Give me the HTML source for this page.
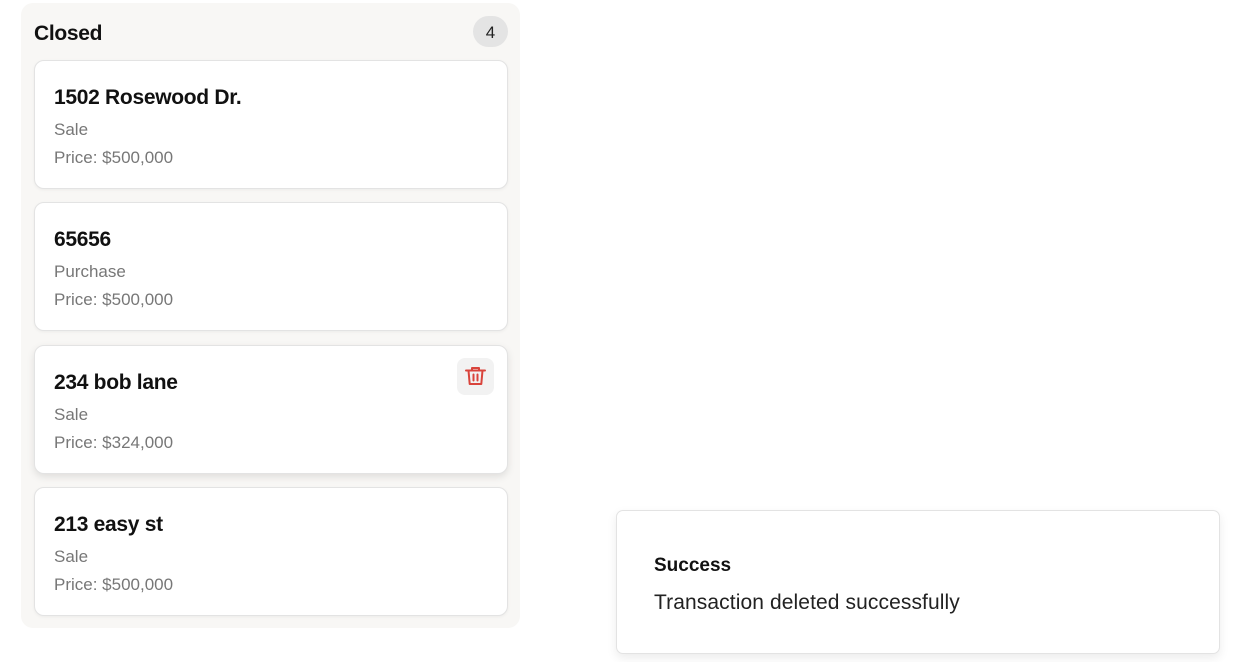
<!DOCTYPE html>
<html><head><style>
body{margin:0;background:#fff;font-family:"Liberation Sans",sans-serif;width:1239px;height:662px;overflow:hidden;position:relative}
.col{position:absolute;left:21px;top:3px;width:499px;height:625px;background:#f8f7f5;border-radius:12px}
.hd{position:absolute;left:13px;top:19px;font-size:21px;font-weight:600;color:#111;letter-spacing:-0.3px}
.badge{position:absolute;left:452px;top:13px;width:35px;height:31px;border-radius:16px;background:#e4e4e4;font-size:17px;text-align:center;line-height:33px;color:#222}
.card{position:absolute;left:13px;width:472px;height:127px;background:#fff;border:1px solid #e3e3e3;border-radius:10px;box-shadow:0 1px 3px rgba(0,0,0,.05)}
.t{position:absolute;left:19px;top:25px;font-size:21px;font-weight:600;color:#111;letter-spacing:-0.3px}
.s{position:absolute;left:19px;top:59px;font-size:17px;color:#777}
.p{position:absolute;left:19px;top:87px;font-size:17px;color:#777}
.tr{position:absolute;left:422px;top:12px;width:37px;height:37px;border-radius:8px;background:#f2f2f2}
.toast{position:absolute;left:616px;top:510px;width:602px;height:142px;border:1px solid #e3e3e3;border-radius:7px;background:#fff;box-shadow:0 4px 10px rgba(0,0,0,.08)}
</style></head><body>
<div class="col">
<div class="hd">Closed</div><div class="badge">4</div>
<div class="card" style="top:57px"><div class="t">1502 Rosewood Dr.</div><div class="s">Sale</div><div class="p">Price: $500,000</div></div>
<div class="card" style="top:199px"><div class="t">65656</div><div class="s">Purchase</div><div class="p">Price: $500,000</div></div>
<div class="card" style="top:342px;box-shadow:0 3px 8px rgba(0,0,0,.1)"><div class="t">234 bob lane</div><div class="s">Sale</div><div class="p">Price: $324,000</div>
<div class="tr"><svg width="37" height="37" viewBox="0 0 37 37" fill="none" stroke="#d9443c" stroke-width="2" stroke-linecap="round" stroke-linejoin="round"><path d="M9 12.5h19M15 12.5v-2.5h7v2.5M11.5 12.5l1.2 13.5h11.6l1.2-13.5M16.5 16.5v6M20.5 16.5v6"/></svg></div></div>
<div class="card" style="top:484px"><div class="t">213 easy st</div><div class="s">Sale</div><div class="p">Price: $500,000</div></div>
</div>
<div class="toast">
<div style="position:absolute;left:37px;top:44px;font-size:19px;font-weight:600;color:#111">Success</div>
<div style="position:absolute;left:37px;top:80px;font-size:21px;color:#222;letter-spacing:0.1px">Transaction deleted successfully</div>
</div>
</body></html>
